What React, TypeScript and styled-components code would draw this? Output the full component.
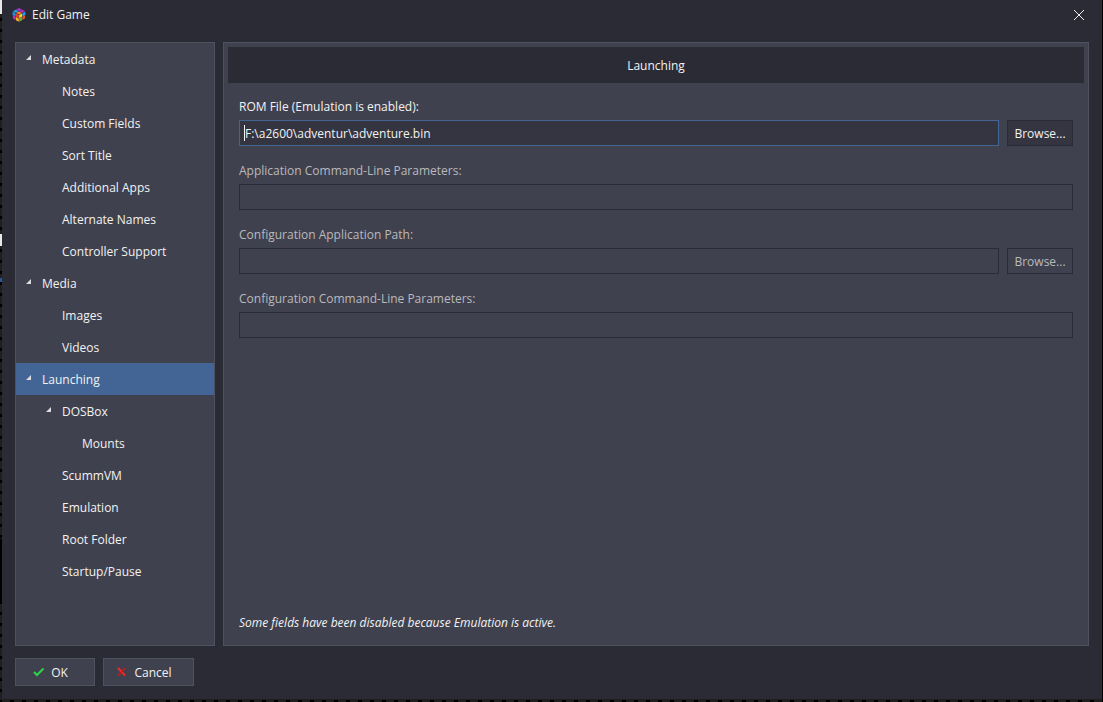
import React, { useState } from 'react';
import styled, { createGlobalStyle } from 'styled-components';

const GlobalStyle = createGlobalStyle`
  * { box-sizing: border-box; }
  html, body, #root { height: 100%; }
  body {
    margin: 0;
    background-color: #1f1f1f;
    background-image:
      linear-gradient(#e8e8e8, #e8e8e8),
      linear-gradient(#e8e8e8, #e8e8e8),
      linear-gradient(#1d5f94, #1d5f94),
      linear-gradient(#000, #000),
      linear-gradient(#000, #000),
      radial-gradient(circle, #000 2px, transparent 2px);
    background-size: 2px 14px, 2px 12px, 2px 4px, 2px 64px, 1px 100%, 12px 11px;
    background-position: 0 0, 0 234px, 0 278px, 0 539px, 100% 0, -6px 3px;
    background-repeat: no-repeat, no-repeat, no-repeat, no-repeat, no-repeat, repeat;
    font-family: "Segoe UI", "Open Sans", sans-serif;
    font-size: 12px;
    line-height: 16px;
    color: #f2f2f2;
  }
  button, input { font: inherit; color: inherit; }
`;

const Desktop = styled.div`
  min-height: 100%;
  display: flex;
  padding: 0 1px 3px 2px;
`;

const Window = styled.div`
  flex: 1;
  display: flex;
  flex-direction: column;
  padding: 0 13px 13px;
  background: #2b2b35;
`;

const TitleBar = styled.header`
  display: flex;
  align-items: center;
  gap: 6px;
  height: 30px;
  margin: 0 -2px 12px -3px;
`;

const WindowTitle = styled.h1`
  flex: 1;
  margin: 0;
  font-size: 12px;
  font-weight: 400;
`;

const CloseButton = styled.button`
  display: flex;
  padding: 7px;
  border: 0;
  background: none;
`;

const Body = styled.div`
  flex: 1;
  display: flex;
  gap: 8px;
`;

const Sidebar = styled.nav`
  width: 200px;
  border: 1px solid #50515e;
  background: #40414e;
`;

const TreeItem = styled.a<{ $level: number; $active?: boolean }>`
  display: flex;
  align-items: center;
  gap: 10px;
  height: 32px;
  padding-top: 2px;
  padding-left: ${(p) => 10 + p.$level * 20}px;
  background: ${(p) => (p.$active ? '#436595' : 'transparent')};
  color: inherit;
  text-decoration: none;
`;

const ArrowSlot = styled.svg`
  flex: none;
  width: 6px;
  height: 10px;
`;

const Panel = styled.main`
  flex: 1;
  display: flex;
  flex-direction: column;
  padding: 4px;
  border: 1px solid #50515e;
  background: #40414e;
`;

const PanelTitle = styled.h2`
  margin: 0;
  padding: 11px 10px 9px;
  background: #2b2b35;
  font-size: 12px;
  font-weight: 400;
  text-align: center;
`;

const Form = styled.form`
  flex: 1;
  display: flex;
  flex-direction: column;
  gap: 17px;
  padding: 16px 11px 10px;
`;

const Field = styled.div<{ $disabled?: boolean }>`
  display: flex;
  flex-direction: column;
  gap: 5px;
  color: ${(p) => (p.$disabled ? '#b9b9bd' : '#f2f2f2')};
`;

const FieldRow = styled.div`
  display: flex;
  gap: 8px;
`;

const TextBox = styled.input`
  flex: 1;
  min-width: 0;
  height: 26px;
  padding: 0 5px;
  border: 1px solid #436595;
  border-radius: 0;
  outline: 0;
  background: #343541;
  &:disabled {
    border-color: #2b2b35;
    background: transparent;
  }
`;

const Caret = styled.span`
  position: absolute;
  left: 5px;
  top: 5px;
  width: 1px;
  height: 16px;
  background: #f2f2f2;
`;

const InputWrap = styled.div`
  position: relative;
  flex: 1;
  display: flex;
`;

const BrowseButton = styled.button`
  width: 66px;
  height: 26px;
  padding: 2px 0 0;
  border: 1px solid #2b2b35;
  background: #343541;
  &:disabled {
    background: transparent;
    color: #b9b9bd;
  }
`;

const Notice = styled.p`
  margin: auto 0 0;
  font-style: italic;
`;

const Footer = styled.footer`
  display: flex;
  gap: 8px;
  margin-top: 12px;
`;

const ActionButton = styled.button<{ $width: number }>`
  display: flex;
  align-items: center;
  justify-content: center;
  gap: 6px;
  width: ${(p) => p.$width}px;
  height: 28px;
  padding: 2px 9px 0 0;
  border: 1px solid #50515e;
  background: #40414e;
`;

type Node = { label: string; level: number; open?: boolean };

const tree: Node[] = [
  { label: 'Metadata', level: 0, open: true },
  { label: 'Notes', level: 1 },
  { label: 'Custom Fields', level: 1 },
  { label: 'Sort Title', level: 1 },
  { label: 'Additional Apps', level: 1 },
  { label: 'Alternate Names', level: 1 },
  { label: 'Controller Support', level: 1 },
  { label: 'Media', level: 0, open: true },
  { label: 'Images', level: 1 },
  { label: 'Videos', level: 1 },
  { label: 'Launching', level: 0, open: true },
  { label: 'DOSBox', level: 1, open: true },
  { label: 'Mounts', level: 2 },
  { label: 'ScummVM', level: 1 },
  { label: 'Emulation', level: 1 },
  { label: 'Root Folder', level: 1 },
  { label: 'Startup/Pause', level: 1 },
];

const CubeLogo = () => (
  <svg width="14" height="14" viewBox="0 0 14 14" aria-hidden="true">
    <path d="M7 0 13 3 13 10.5 7 14 1 10.5 1 3Z" fill="#3a2440" />
    <path d="M4 1.6 7 0 10 1.6 7 3.2Z" fill="#9a35cf" />
    <path d="M10.2 1.7 13.2 3.2 10.2 4.8 7.4 3.3Z" fill="#b52fc0" />
    <path d="M3.8 1.7 6.6 3.3 3.8 4.8.8 3.2Z" fill="#23a4ee" />
    <path d="M7 3.4 10 5 7 6.6 4 5Z" fill="#f08a1e" />
    <path d="M.6 3.7 3.5 5.2 3.5 8.4.7 6.9Z" fill="#2497ea" />
    <path d="M3.8 5.4 6.8 7 6.8 10.2 3.8 8.6Z" fill="#ee3d25" />
    <path d="M.7 7.2 3.5 8.7 3.6 12 1.1 10.6Z" fill="#c42fb4" />
    <path d="M3.8 8.9 6.8 10.5 6.8 13.8 4 12.2Z" fill="#f9b81b" />
    <path d="M7.2 7 10.2 5.4 10.2 8.6 7.2 10.2Z" fill="#f9e021" />
    <path d="M10.5 5.2 13.4 3.7 13.3 6.9 10.5 8.4Z" fill="#1fa6ea" />
    <path d="M7.2 10.5 10.2 8.9 10 12.2 7.2 13.8Z" fill="#52bd3c" />
    <path d="M10.5 8.7 13.3 7.2 12.9 10.6 10.4 12Z" fill="#f0541f" />
  </svg>
);

export default function App() {
  const [rom, setRom] = useState('F:\\a2600\\adventur\\adventure.bin');
  return (
    <>
      <GlobalStyle />
      <Desktop>
        <Window>
          <TitleBar>
            <CubeLogo />
            <WindowTitle>Edit Game</WindowTitle>
            <CloseButton type="button" aria-label="Close">
              <svg width="10" height="10" viewBox="0 0 10 10">
                <path d="M0 0 10 10M10 0 0 10" stroke="#f2f2f2" fill="none" />
              </svg>
            </CloseButton>
          </TitleBar>
          <Body>
            <Sidebar aria-label="Sections">
              {tree.map((n) => (
                <TreeItem
                  key={n.label}
                  href="#"
                  $level={n.level}
                  $active={n.label === 'Launching'}
                >
                  <ArrowSlot viewBox="0 0 6 10" aria-hidden="true">
                    {n.open && <path d="M5 0V5H0Z" fill="#dcdce0" />}
                  </ArrowSlot>
                  {n.label}
                </TreeItem>
              ))}
            </Sidebar>
            <Panel>
              <PanelTitle>Launching</PanelTitle>
              <Form>
                <Field>
                  <label htmlFor="rom">ROM File (Emulation is enabled):</label>
                  <FieldRow>
                    <InputWrap>
                      <TextBox
                        id="rom"
                        value={rom}
                        onChange={(e) => setRom(e.target.value)}
                      />
                      <Caret />
                    </InputWrap>
                    <BrowseButton type="button">Browse...</BrowseButton>
                  </FieldRow>
                </Field>
                <Field $disabled>
                  <label htmlFor="params">Application Command-Line Parameters:</label>
                  <FieldRow>
                    <TextBox id="params" disabled />
                  </FieldRow>
                </Field>
                <Field $disabled>
                  <label htmlFor="config">Configuration Application Path:</label>
                  <FieldRow>
                    <TextBox id="config" disabled />
                    <BrowseButton type="button" disabled>
                      Browse...
                    </BrowseButton>
                  </FieldRow>
                </Field>
                <Field $disabled>
                  <label htmlFor="configParams">
                    Configuration Command-Line Parameters:
                  </label>
                  <FieldRow>
                    <TextBox id="configParams" disabled />
                  </FieldRow>
                </Field>
                <Notice>Some fields have been disabled because Emulation is active.</Notice>
              </Form>
            </Panel>
          </Body>
          <Footer>
            <ActionButton type="button" $width={80}>
              <svg width="12" height="12" viewBox="0 0 12 12" aria-hidden="true">
                <path d="M1 5 4 8 10.5 1.5" stroke="#2fd34a" strokeWidth="2" fill="none" />
              </svg>
              OK
            </ActionButton>
            <ActionButton type="button" $width={91}>
              <svg width="12" height="12" viewBox="0 0 12 12" aria-hidden="true">
                <path d="M2 1 9 8.5" stroke="#ee2a2a" strokeWidth="2" fill="none" />
                <path d="M9.5 1 2 8.5" stroke="#c81c1c" strokeWidth="1.5" fill="none" />
              </svg>
              Cancel
            </ActionButton>
          </Footer>
        </Window>
      </Desktop>
    </>
  );
}
